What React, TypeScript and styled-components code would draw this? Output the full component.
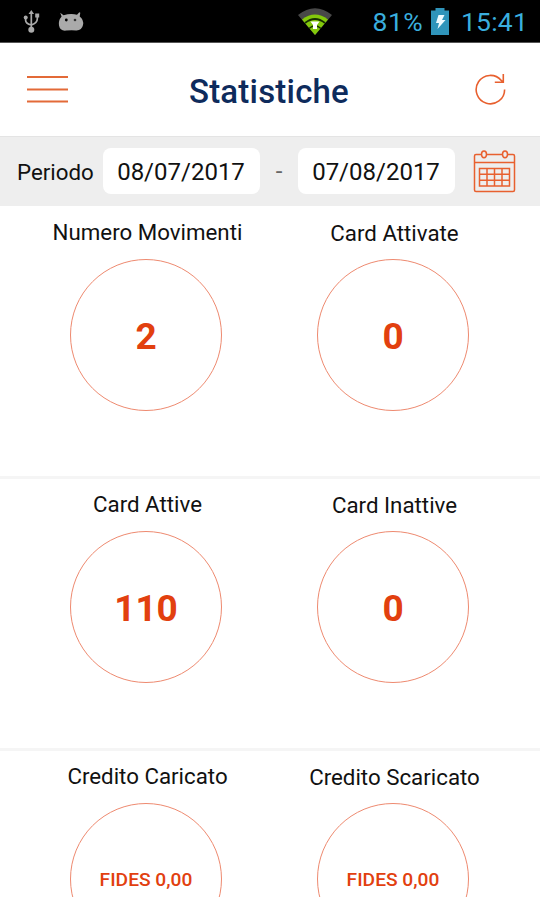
import React from "react";
import styled, { createGlobalStyle } from "styled-components";

const ORANGE = "#e8602f";

const GlobalStyle = createGlobalStyle`
  * { box-sizing: border-box; }
  body { margin: 0; background: #fff; }
`;

const Screen = styled.main`
  width: 540px;
  height: 900px;
  overflow: hidden;
  display: flex;
  flex-direction: column;
  background: #fff;
  border-bottom: 3px solid #fff;
  font-family: Roboto, "Liberation Sans", sans-serif;
  color: #111;
`;

const StatusBar = styled.header`
  flex: none;
  height: 43px;
  padding: 0 12px 0 23px;
  display: flex;
  align-items: center;
  background: #000;
  border-bottom: 1px solid #555;
  color: #3aaede;
  font-size: 26.5px;
  line-height: 42px;
`;

const UsbIcon = styled.svg`
  width: 17px;
  height: 24px;
  margin-top: 2px;
`;

const DroidIcon = styled.svg`
  width: 26px;
  height: 20px;
  margin: 2px 0 0 18px;
`;

const WifiIcon = styled.svg`
  width: 34px;
  height: 28px;
  margin: 0 0 0 214px;
`;

const Percent = styled.span`
  margin: 1px 0 0 auto;
  letter-spacing: 0.4px;
`;

const BatteryIcon = styled.svg`
  width: 18px;
  height: 27px;
  margin-left: 8px;
`;

const Clock = styled.span`
  width: 67px;
  margin: 1px 0 0 12px;
  letter-spacing: 0.2px;
`;

const AppBar = styled.div`
  flex: none;
  height: 93px;
  padding: 0 32px 0 27px;
  display: flex;
  align-items: center;
  justify-content: space-between;
`;

const MenuIcon = styled.svg`
  width: 41px;
  height: 28px;
`;

const Title = styled.h1`
  margin: 4px 4px 0 0;
  color: #0e2b5c;
  font-size: 33px;
  line-height: 40px;
  font-weight: 500;
  letter-spacing: 0.2px;
`;

const RefreshIcon = styled.svg`
  width: 34px;
  height: 34px;
`;

const FilterBar = styled.section`
  flex: none;
  height: 70px;
  padding: 0 24px 2px 17px;
  display: flex;
  align-items: center;
  background: #eee;
  border-top: 1px solid #e4e4e4;
`;

const FilterLabel = styled.label`
  flex: none;
  width: 86px;
  font-size: 22.3px;
  line-height: 30px;
  margin-top: 3px;
`;

const DateField = styled.button`
  flex: none;
  width: 157px;
  height: 46px;
  padding: 2px 1px 0 0;
  border: 0;
  border-radius: 8px;
  background: #fff;
  color: #111;
  font: 24px/30px Roboto, "Liberation Sans", sans-serif;
`;

const Dash = styled.span`
  flex: none;
  width: 38px;
  text-align: center;
  font-size: 24px;
  color: #666;
`;

const CalendarIcon = styled.svg`
  flex: none;
  width: 44px;
  height: 44px;
  margin: 1px 0 0 17px;
`;

const StatRow = styled.section`
  flex: none;
  height: 272px;
  padding: 0 23px;
  display: grid;
  grid-template-columns: 247px 247px;
  background: linear-gradient(#f5f5f5, #f5f5f5) 0 270px / 100% 2px no-repeat;

  & + & {
    background: linear-gradient(#f5f5f5, #f5f5f5) 0 0 / 100% 1px no-repeat,
      linear-gradient(#f5f5f5, #f5f5f5) 0 270px / 100% 2px no-repeat;
  }
`;

const Stat = styled.article<{ $drop: number }>`
  display: flex;
  flex-direction: column;
  align-items: center;
  padding-top: ${(p) => 12 + p.$drop}px;
`;

const StatName = styled.h2<{ $drop: number }>`
  margin: 0 0 ${(p) => 11 - p.$drop}px;
  padding-left: 2px;
  height: 30px;
  font-size: 22.3px;
  line-height: 28px;
  font-weight: 400;
  white-space: nowrap;
`;

const Ring = styled.div<{ $small?: boolean }>`
  width: 152px;
  height: 152px;
  margin-right: 1px;
  padding-top: ${(p) => (p.$small ? 1 : 2)}px;
  border: 1.3px solid #ee8a70;
  border-radius: 50%;
  display: flex;
  align-items: center;
  justify-content: center;
  color: #e2400f;
  font-weight: ${(p) => (p.$small ? 500 : 700)};
  font-size: ${(p) => (p.$small ? 19.2 : 37)}px;
`;

type Entry = { name: string; value: string };

const rows: Entry[][] = [
  [{ name: "Numero Movimenti", value: "2" }, { name: "Card Attivate", value: "0" }],
  [{ name: "Card Attive", value: "110" }, { name: "Card Inattive", value: "0" }],
  [{ name: "Credito Caricato", value: "FIDES 0,00" }, { name: "Credito Scaricato", value: "FIDES 0,00" }],
];

export default function App() {
  return (
    <Screen>
      <GlobalStyle />
      <StatusBar>
        <UsbIcon viewBox="0 0 17 24" fill="none" stroke="#aaa" strokeWidth="1.7">
          <path d="M8.3 3v17M2.6 8v2.2q0 3.3 5.7 4.8M14.3 6v3q0 4-6 6" />
          <path d="M8.3 0l2.8 4H5.5z" fill="#aaa" stroke="none" />
          <circle cx="2.7" cy="7.5" r="2" fill="#aaa" stroke="none" />
          <path d="M12.2 3.5h4v4h-4z" fill="#aaa" stroke="none" />
          <circle cx="8.3" cy="19.8" r="3" fill="#aaa" stroke="none" />
        </UsbIcon>
        <DroidIcon viewBox="0 0 26 20">
          <path d="M2.2.8l3.400 2.400Q13 1.200 19 2.800L21.300.2l1 .6-.6 3.800Q26 8 25 13q-1.200 5.700-7 5.400-5-.6-10 .2-6 .6-7-5Q.2 8.500 3.600 4.600z" fill="#aaa" />
          <circle cx="8.300" cy="8" r="1.400" fill="#000" />
          <circle cx="17" cy="8" r="1.300" fill="#333" />
        </DroidIcon>
        <WifiIcon viewBox="0 0 34 28">
          <path d="M0 8Q17-5.500 34 8L17 28z" fill="#484848" />
          <path d="M4 12.500Q17 2.500 30 12.500L17 28z" fill="#83c90b" />
          <path d="M7 16Q17 8 27 16" fill="none" stroke="#173000" strokeWidth="1.800" />
          <path d="M11 21.500Q17 16 23 21.500" fill="none" stroke="#173000" strokeWidth="1.200" />
          <path d="M12.500 14.500h9L19 18v4h-4v-4z" fill="#fff" />
        </WifiIcon>
        <Percent>81%</Percent>
        <BatteryIcon viewBox="0 0 18 27">
          <path d="M0 2.500h4.500V0h9v2.500H18V27H0z" fill="#2f94ba" />
          <path d="M7.500 7h6l-2.500 5h3.500L6.500 21l1.500-6H5z" fill="#eefaff" />
        </BatteryIcon>
        <Clock>15:41</Clock>
      </StatusBar>
      <AppBar>
        <MenuIcon viewBox="0 0 41 28" stroke="#e36a38" strokeWidth="2">
          <path d="M0 1h41M0 13.500h41M0 25.500h41" />
        </MenuIcon>
        <Title>Statistiche</Title>
        <RefreshIcon viewBox="0 0 34 34" fill="none" stroke={ORANGE} strokeWidth="1.600">
          <path d="M30.600 16.500A14.200 14.200 0 1 1 27.300 7.500M29.300 1v8.200h-8.500M29.300 9.200L25 5.500" />
        </RefreshIcon>
      </AppBar>
      <FilterBar>
        <FilterLabel>Periodo</FilterLabel>
        <DateField>08/07/2017</DateField>
        <Dash>-</Dash>
        <DateField>07/08/2017</DateField>
        <CalendarIcon viewBox="0 0 44 44" fill="none" stroke={ORANGE} strokeWidth="1.500">
          <path d="M9.500 5.500H4Q2.500 5.500 2.500 7v34q0 1.500 1.500 1.500h37q1.500 0 1.500-1.500V7q0-1.500-1.500-1.500h-5.500M14.500 5.500h16M2.500 13.500h40" />
          <ellipse cx="12" cy="5.300" rx="2.500" ry="3.400" />
          <ellipse cx="33" cy="5.300" rx="2.500" ry="3.400" />
          <path d="M7.500 19.500h30v17.500h-30zM15 19.500v17.500M22.500 19.500v17.500M30 19.500v17.500M7.500 25.300h30M7.500 31.200h30" />
        </CalendarIcon>
      </FilterBar>
      {rows.map((entries) => (
        <StatRow key={entries[0].name}>
          {entries.map((entry, i) => (
            <Stat key={entry.name} $drop={i}>
              <StatName $drop={i}>{entry.name}</StatName>
              <Ring $small={entry.value.length > 3}>{entry.value}</Ring>
            </Stat>
          ))}
        </StatRow>
      ))}
    </Screen>
  );
}
